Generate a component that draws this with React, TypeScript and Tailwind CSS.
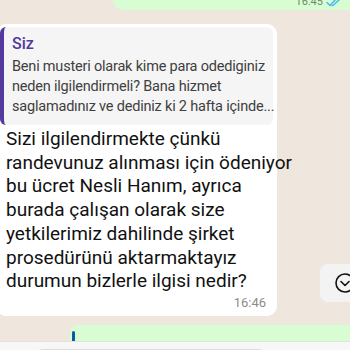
import React from "react";

const quoteLines = [
  "Beni musteri olarak kime para odediginiz",
  "neden ilgilendirmeli? Bana hizmet",
  "saglamadınız ve dediniz ki 2 hafta içinde...",
];

const bodyLines = [
  "Sizi ilgilendirmekte çünkü",
  "randevunuz alınması için ödeniyor",
  "bu ücret Nesli Hanım, ayrıca",
  "burada çalışan olarak size",
  "yetkilerimiz dahilinde şirket",
  "prosedürünü aktarmaktayız",
  "durumun bizlerle ilgisi nedir?",
];

const CheckDouble = () => (
  <svg width="16" height="10" viewBox="0 0 16 10" fill="none" stroke="#53bdeb" strokeWidth="1.6" strokeLinecap="round" strokeLinejoin="round">
    <path d="M1 5.5l3 3L10.5 1.5" />
    <path d="M6 8.5l1 0L14.5 1.5" />
  </svg>
);

const App: React.FC = () => {
  return (
    <div
      className="w-[350px] h-[350px] overflow-hidden bg-[#efe7de] flex flex-col"
      style={{ fontFamily: "Roboto, 'Noto Sans', sans-serif" }}
    >
      {/* previous outgoing message, cut at the top */}
      <div className="shrink-0 ml-[113px] -mt-[20px] h-[30px] bg-[#d9fdd3] rounded-bl-[10px] flex items-end justify-end pr-[8px] pb-[3px] gap-[3px]">
        <span className="text-[11px] leading-none text-[#6d8a6a]">16:45</span>
        <CheckDouble />
      </div>

      {/* incoming reply bubble */}
      <div className="shrink-0 flex items-end mt-[14px]">
        <div className="w-[281px] -ml-[4px] bg-white rounded-[10px] pt-[3px] pl-[4px] pr-[4px] pb-[5px]">
          <div className="bg-[#f5f5f5] rounded-[6px] border-l-[4px] border-[#54399f] pl-[8px] pr-[4px] pt-[7px] pb-[8px]">
            <div className="text-[16px] leading-[20px] font-medium text-[#54399f]">Siz</div>
            <div className="text-[14.5px] tracking-[-0.2px] leading-[20px] text-[#404040] mt-[3px] whitespace-nowrap">
              {quoteLines.map((l) => (
                <div key={l}>{l}</div>
              ))}
            </div>
          </div>
          <div className="px-[6px] pt-[2px] text-[19px] leading-[23.7px] text-[#111111] whitespace-nowrap">
            {bodyLines.map((l) => (
              <div key={l}>{l}</div>
            ))}
          </div>
          <div className="flex justify-end pr-[7px] mt-[2px]">
            <span className="text-[13px] leading-[16px] text-[#8c8c8c]">16:46</span>
          </div>
        </div>
        <div className="ml-auto mb-[14px] w-[30px] h-[38px] bg-[#f3f3f3] rounded-l-[8px] flex items-center justify-end">
          <svg width="22" height="22" viewBox="0 0 22 22" fill="none" stroke="#111" strokeWidth="1.6" strokeLinecap="round" strokeLinejoin="round" className="-mr-[6px]">
            <circle cx="11" cy="11" r="9" />
            <path d="M7 9.5l4 4 4-4" />
          </svg>
        </div>
      </div>

      {/* next outgoing message, cut at the bottom */}
      <div className="shrink-0 ml-[70px] mt-[9px] h-[16px] bg-[#d9fdd3] rounded-tl-[8px] pl-[2px] pt-[6px]">
        <div className="w-[3px] h-[10px] bg-[#0b5aa8] rounded-t-[2px]" />
      </div>

      {/* input bar */}
      <div className="flex-1 bg-[#f7f7f7] border-t border-[#e2e2e2] pt-[7px] pl-[33px] flex">
        <div className="w-[236px] h-[20px] bg-white border border-[#dcdcdc] rounded-t-[10px]" />
        <div className="ml-auto mr-[1px] mt-[2px] w-[2px] h-[8px] bg-[#333]" />
      </div>
    </div>
  );
};

export default App;
